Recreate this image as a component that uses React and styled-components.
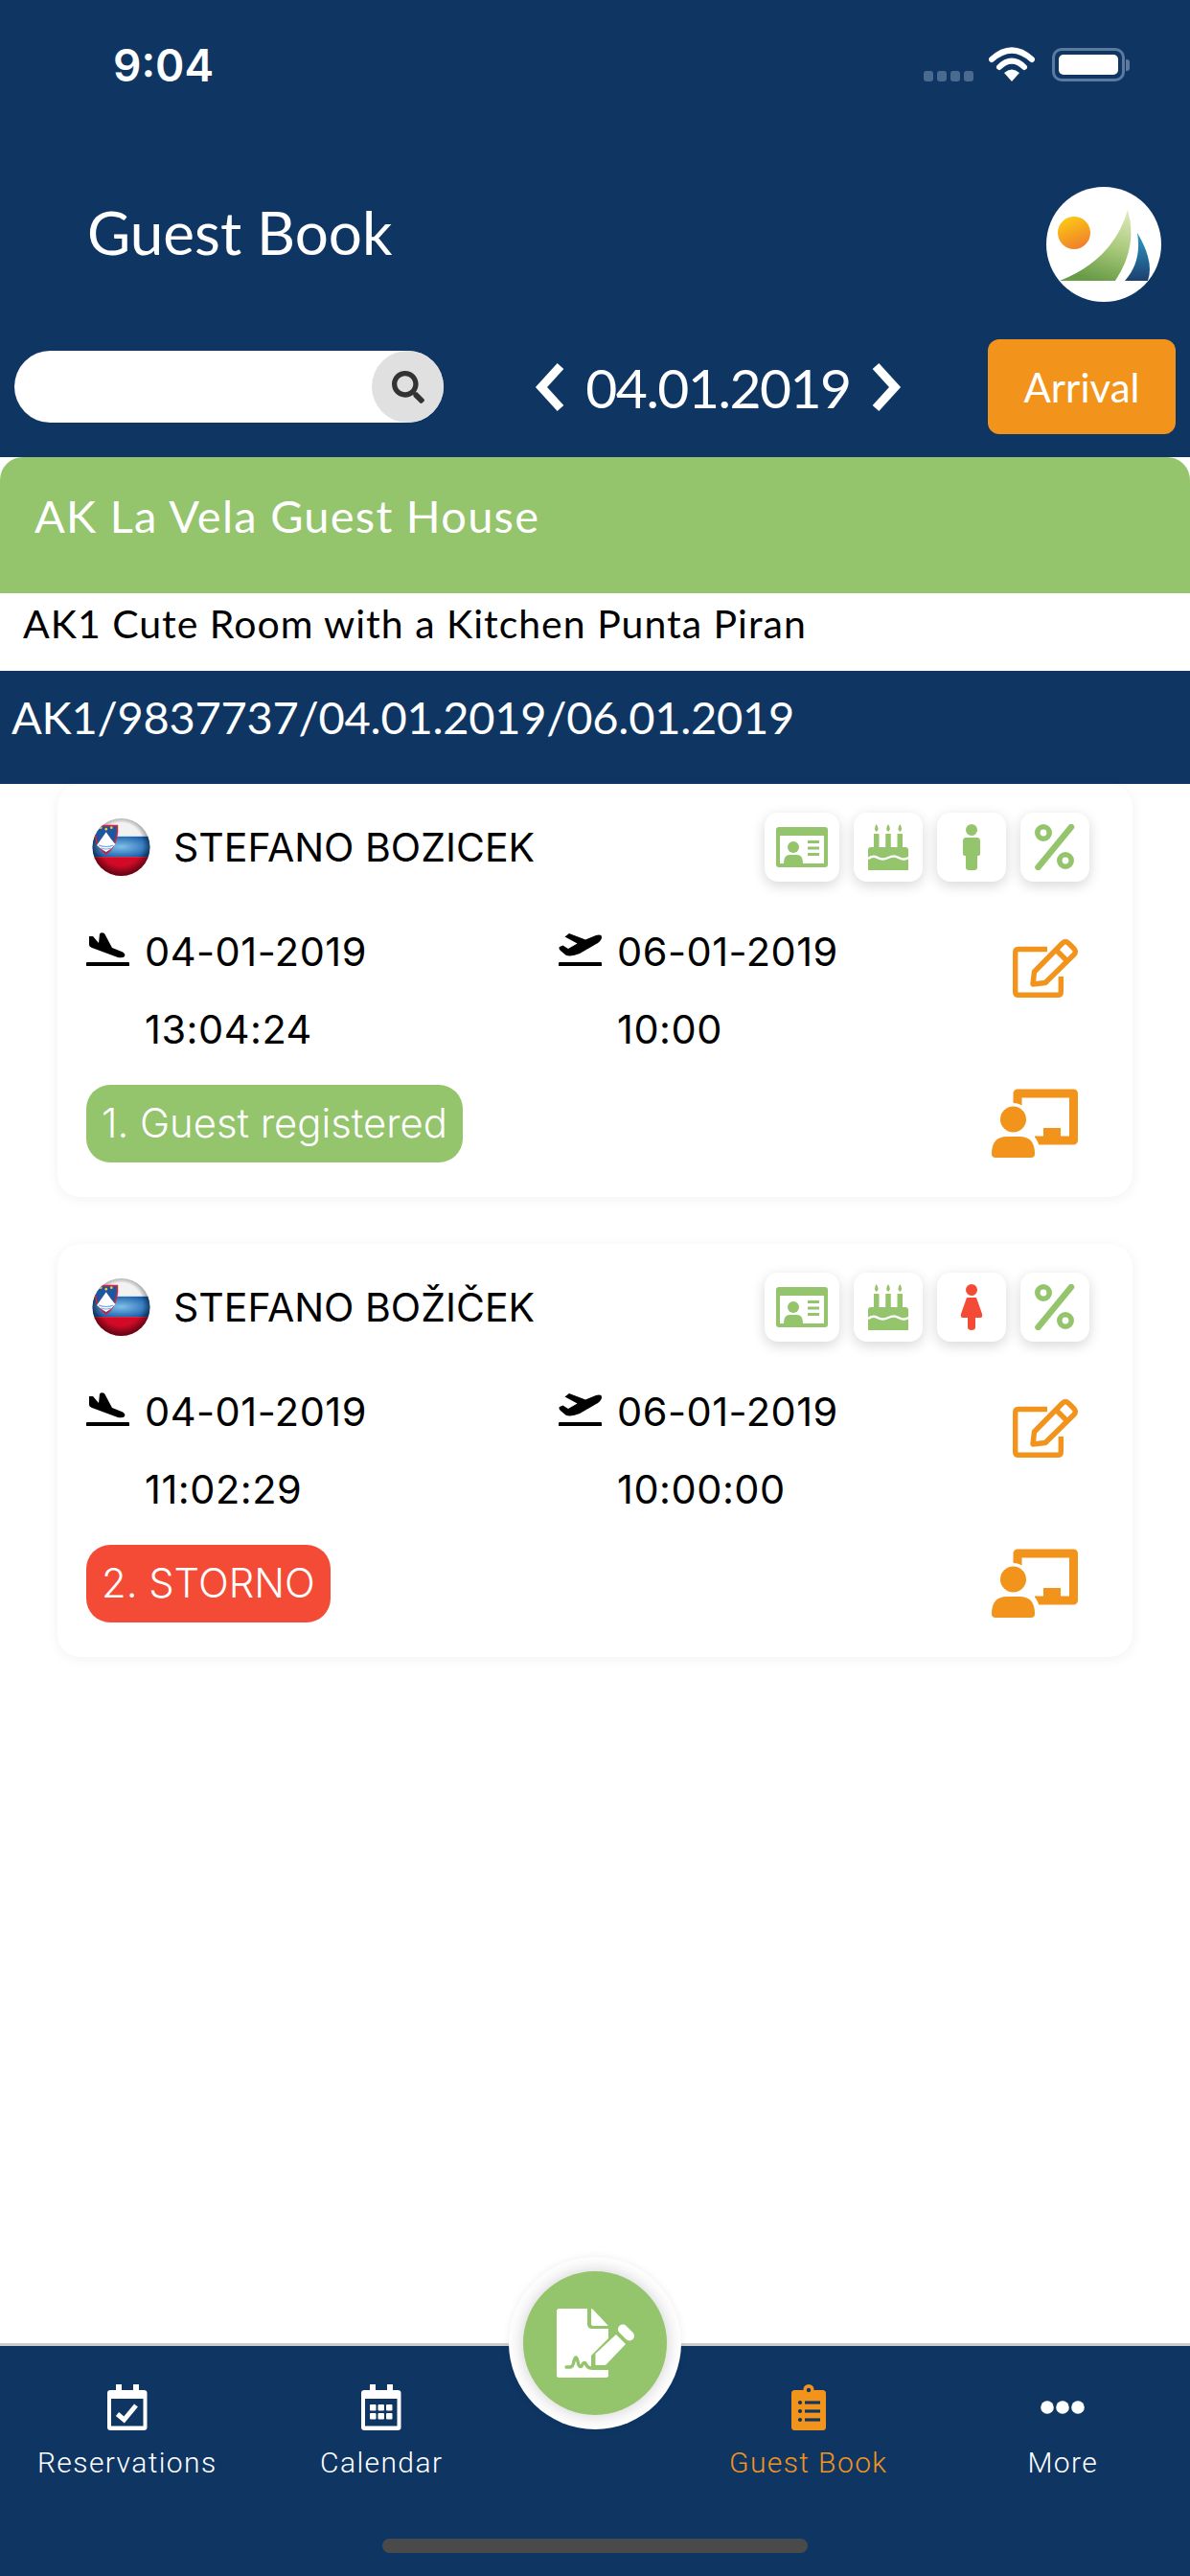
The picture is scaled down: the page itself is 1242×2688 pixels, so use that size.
import React from "react";
import styled, { createGlobalStyle } from "styled-components";
import { FaSearch } from "react-icons/fa";

const NAVY = "#0f3663";
const GREEN = "#94c46c";
const ORANGE = "#f2931c";
const RED = "#f44b36";

const GlobalStyle = createGlobalStyle`
  html, body {
    margin: 0;
    padding: 0;
    background: #fff;
  }
  * {
    box-sizing: border-box;
  }
`;

const Page = styled.div`
  width: 1242px;
  height: 2688px;
  display: flex;
  flex-direction: column;
  overflow: hidden;
  background: #fff;
  font-family: "Inter", "Liberation Sans", sans-serif;
`;

const Header = styled.header`
  background: ${NAVY};
  height: 477px;
  flex-shrink: 0;
`;

const StatusBar = styled.div`
  height: 195px;
  padding: 43px 68px 0 118px;
  display: flex;
  justify-content: space-between;
  align-items: flex-start;
`;

const Clock = styled.div`
  color: #fff;
  font-size: 46px;
  font-weight: 600;
  line-height: 50px;
`;

const StatusIcons = styled.div`
  display: flex;
  align-items: flex-end;
  height: 36px;
  margin-top: 6px;
`;

const SignalDots = styled.div`
  display: flex;
  gap: 4px;
  margin-right: 16px;
`;

const SignalDot = styled.span`
  width: 10px;
  height: 11px;
  border-radius: 3px;
  background: #4a6a90;
`;

const Battery = styled.div`
  width: 76px;
  height: 35px;
  margin-left: 18px;
  padding: 4px;
  border: 3px solid #5c7a9e;
  border-radius: 10px;
  position: relative;
  &::after {
    content: "";
    position: absolute;
    right: -8px;
    top: 9px;
    width: 4px;
    height: 12px;
    border-radius: 0 3px 3px 0;
    background: #5c7a9e;
  }
`;

const BatteryFill = styled.div`
  height: 100%;
  background: #fff;
  border-radius: 5px;
`;

const TitleRow = styled.div`
  height: 120px;
  padding: 0 30px 0 91px;
  display: flex;
  justify-content: space-between;
  align-items: flex-start;
`;

const Title = styled.h1`
  margin: 12px 0 0;
  color: #fff;
  font-family: "Lato", sans-serif;
  font-size: 62px;
  font-weight: 400;
  line-height: 70px;
`;

const Logo = styled.div`
  width: 120px;
  height: 120px;
  border-radius: 50%;
  background: #fff;
  overflow: hidden;
`;

const Toolbar = styled.div`
  margin-top: 39px;
  height: 99px;
  padding: 0 15px;
  display: flex;
  align-items: center;
  justify-content: space-between;
`;

const Search = styled.div`
  width: 448px;
  height: 75px;
  border-radius: 38px;
  background: #fff;
  display: flex;
  justify-content: flex-end;
`;

const SearchCap = styled.div`
  width: 75px;
  height: 75px;
  border-radius: 50%;
  background: #e0e0e0;
  color: #333;
  display: flex;
  align-items: center;
  justify-content: center;
`;

const DatePicker = styled.div`
  display: flex;
  align-items: center;
  gap: 21px;
  margin-left: 5px;
`;

const DateText = styled.div`
  color: #fff;
  font-family: "Lato", sans-serif;
  font-size: 57px;
  line-height: 60px;
  letter-spacing: -1.5px;
`;

const ArrivalButton = styled.button`
  width: 196px;
  height: 99px;
  border: 0;
  border-radius: 12px;
  background: ${ORANGE};
  color: #fff;
  font-family: "Lato", sans-serif;
  font-size: 42px;
  padding: 0;
`;

const PropertyBar = styled.div`
  height: 142px;
  padding: 31px 36px 0;
  background: ${GREEN};
  border-radius: 24px 24px 0 0;
  color: #fff;
  font-family: "Lato", sans-serif;
  font-size: 47px;
  line-height: 60px;
  letter-spacing: 1.25px;
`;

const RoomRow = styled.div`
  height: 81px;
  padding: 7px 24px 0;
  background: #fff;
  color: #000;
  font-family: "Lato", sans-serif;
  font-size: 41px;
  line-height: 50px;
  letter-spacing: 1px;
`;

const BookingRow = styled.div`
  height: 118px;
  padding: 18px 12px 0;
  background: ${NAVY};
  color: #fff;
  font-family: "Lato", sans-serif;
  font-size: 47px;
  line-height: 60px;
  letter-spacing: -0.25px;
`;

const PropertyStack = styled.div`
  flex-shrink: 0;
`;

const CardList = styled.div`
  padding: 0 60px;
  display: flex;
  flex-direction: column;
  gap: 49px;
`;

const Card = styled.article`
  height: 431px;
  padding: 30px 45px 0 30px;
  background: #fff;
  border-radius: 24px;
  box-shadow: 0 2px 14px rgba(0, 0, 0, 0.06);
`;

const CardTop = styled.div`
  height: 72px;
  display: flex;
  align-items: center;
  justify-content: space-between;
`;

const GuestName = styled.div`
  display: flex;
  align-items: center;
  gap: 24px;
  margin-left: 6px;
  font-size: 41px;
  color: #000;
`;

const Badges = styled.div`
  display: flex;
  gap: 15px;
`;

const Badge = styled.div`
  width: ${(p) => (p.$wide ? 78 : 72)}px;
  height: 72px;
  background: #fff;
  border-radius: 14px;
  box-shadow: 0 4px 14px rgba(0, 0, 0, 0.16);
  display: flex;
  align-items: center;
  justify-content: center;
`;

const CardBody = styled.div`
  margin-top: 32px;
  display: flex;
  justify-content: space-between;
`;

const DateColumns = styled.div`
  display: grid;
  grid-template-columns: 493px auto;
`;

const DateBlock = styled.div`
  display: grid;
  grid-template-columns: 61px auto;
  grid-auto-rows: 81px;
  align-items: center;
  font-size: 41.5px;
  letter-spacing: 0.5px;
  color: #000;
`;

const DateIcon = styled.div`
  height: 36px;
  margin-top: -13px;
`;

const TimeText = styled.div`
  grid-column: 2;
`;

const StatusPill = styled.div`
  display: inline-block;
  height: 81px;
  margin-top: 18px;
  padding: 0 16px;
  border-radius: 25px;
  background: ${(p) => (p.$cancelled ? RED : GREEN)};
  color: #fff;
  font-size: 41.8px;
  font-weight: 300;
  line-height: 81px;
`;

const Actions = styled.div`
  margin-right: 12px;
  padding-top: 28px;
  display: flex;
  flex-direction: column;
  align-items: flex-end;
  gap: 95px;
`;

const Spacer = styled.div`
  flex: 1;
`;

const TabBar = styled.nav`
  position: relative;
  height: 243px;
  flex-shrink: 0;
  background: ${NAVY};
  border-top: 3px solid #cdcdcd;
  display: grid;
  grid-template-columns: 1fr 1fr 180px 1fr 1fr;
`;

const Tab = styled.div`
  padding-top: 40px;
  display: flex;
  flex-direction: column;
  align-items: center;
  color: ${(p) => (p.$active ? ORANGE : "#fff")};
  font-family: "Roboto", sans-serif;
  font-size: 30px;
  font-weight: 300;
  letter-spacing: 1.4px;
`;

const TabIcon = styled.div`
  height: 48px;
  display: flex;
  align-items: center;
  margin-bottom: 16px;
`;

const FabRing = styled.div`
  position: absolute;
  left: 531px;
  top: -93px;
  width: 180px;
  height: 180px;
  border-radius: 50%;
  background: #fff;
  box-shadow: 0 0 10px rgba(0, 0, 0, 0.06);
  display: flex;
  align-items: center;
  justify-content: center;
`;

const Fab = styled.div`
  width: 150px;
  height: 150px;
  border-radius: 50%;
  background: ${GREEN};
  box-shadow: 0 0 18px rgba(0, 0, 0, 0.2);
  display: flex;
  align-items: center;
  justify-content: center;
`;

const HomeIndicator = styled.div`
  position: absolute;
  left: 399px;
  bottom: 24px;
  width: 444px;
  height: 15px;
  border-radius: 8px;
  background: #4a4a4a;
`;

const Chevron = ({ left }) => (
  <svg width="32" height="52" viewBox="0 0 32 52">
    <polyline
      points={left ? "27,4 7,26 27,48" : "5,4 25,26 5,48"}
      fill="none"
      stroke="#fff"
      strokeWidth="9"
    />
  </svg>
);

const Wifi = () => (
  <svg width="48" height="36" viewBox="0 0 48 36">
    <path d="M3 13 Q24 -6 45 13" fill="none" stroke="#fff" strokeWidth="6" strokeLinecap="round" />
    <path d="M11 21 Q24 8 37 21" fill="none" stroke="#fff" strokeWidth="6" strokeLinecap="round" />
    <path d="M24 36 L16 27 Q24 20 32 27 Z" fill="#fff" />
  </svg>
);

const LogoMark = () => (
  <svg width="120" height="120" viewBox="0 0 120 120">
    <defs>
      <linearGradient id="sun" x1="0.3" y1="0" x2="0.7" y2="1">
        <stop offset="0" stopColor="#fdc914" />
        <stop offset="1" stopColor="#ef7d2c" />
      </linearGradient>
      <linearGradient id="sailGreen" x1="0.8" y1="0" x2="0.5" y2="1">
        <stop offset="0" stopColor="#dde7b8" />
        <stop offset="0.5" stopColor="#a9c97c" />
        <stop offset="1" stopColor="#689b45" />
      </linearGradient>
      <linearGradient id="sailBlue" x1="0.5" y1="0" x2="0.5" y2="1">
        <stop offset="0" stopColor="#2f9bc9" />
        <stop offset="1" stopColor="#1c3f6e" />
      </linearGradient>
    </defs>
    <circle cx="29" cy="48" r="17" fill="url(#sun)" />
    <path d="M14 98 Q70 76 85 24 Q96 62 72 98 Z" fill="url(#sailGreen)" />
    <path d="M95 48 Q113 78 106 98 H82 Q100 78 95 48 Z" fill="url(#sailBlue)" />
  </svg>
);

const Flag = ({ uid }) => (
  <svg width="61" height="62" viewBox="0 0 60 60">
    <defs>
      <clipPath id={`clip${uid}`}>
        <circle cx="30" cy="30" r="29.5" />
      </clipPath>
      <radialGradient id={`blue${uid}`} cx="0.5" cy="0.5" r="0.6">
        <stop offset="0" stopColor="#7fc0ea" />
        <stop offset="1" stopColor="#1458a6" />
      </radialGradient>
      <radialGradient id={`shade${uid}`} cx="0.5" cy="0.45" r="0.52">
        <stop offset="0.7" stopColor="#000" stopOpacity="0" />
        <stop offset="1" stopColor="#000" stopOpacity="0.5" />
      </radialGradient>
    </defs>
    <g clipPath={`url(#clip${uid})`}>
      <rect width="60" height="19" fill="#f2f2f2" />
      <rect y="19" width="60" height="21" fill={`url(#blue${uid})`} />
      <rect y="40" width="60" height="20" fill="#d20a28" />
      <rect width="60" height="60" fill={`url(#shade${uid})`} />
      <path d="M3 8 H26 Q27 28 14.5 37 Q2 29 3 8 Z" fill="#1f56a2" stroke="#dd2233" strokeWidth="1.5" />
      <path d="M5 28 L10 21 L14.5 14.5 L19 21 L24 27 Q20 32 14.5 35 Q9 32 5 28 Z" fill="#fff" />
      <path d="M7 28 Q14.5 31 22 28 M9 31 Q14.5 33 20 31" fill="none" stroke="#6aa6dc" strokeWidth="1" />
      <circle cx="9" cy="10" r="1.3" fill="#f0d030" />
      <circle cx="20" cy="10" r="1.3" fill="#f0d030" />
      <circle cx="14.5" cy="11.5" r="1.3" fill="#f0d030" />
    </g>
  </svg>
);

const LandingIcon = () => (
  <svg width="45" height="36" viewBox="0 0 45 36">
    <path
      fill="#000"
      d="M3 5 H7 L13 12 L14 2.5 Q16 0.5 19 2 L27 17 L37 21 Q41.5 23 40 26 Q38 28 33 27 L6 17 Q3 16 3 14 Z"
    />
    <rect y="32" width="45" height="4.3" rx="1" fill="#000" />
  </svg>
);

const TakeoffIcon = () => (
  <svg width="45" height="36" viewBox="0 0 45 36">
    <path
      fill="#000"
      d="M6.5 5.5 L11 2 L28 8.5 L39 4 Q45 2.5 45 6 Q45 9 41 12 L22 23 Q14 26.5 8 25 L2 20 Q-0.5 17.5 1 16 L4.5 14.5 L10 18 L19.5 12.5 Z"
    />
    <rect y="32" width="45" height="4.3" rx="1" fill="#000" />
  </svg>
);

const IdCardIcon = () => (
  <svg width="54" height="42" viewBox="0 0 54 42">
    <rect width="54" height="42" rx="3" fill={GREEN} />
    <rect x="4" y="9" width="46" height="29" fill="#fff" />
    <circle cx="18" cy="21" r="6" fill={GREEN} />
    <path d="M8 38 Q8 29 14 29 H22 Q28 29 28 38 Z" fill={GREEN} />
    <rect x="33" y="14" width="12" height="3" fill={GREEN} />
    <rect x="33" y="20.5" width="12" height="3" fill={GREEN} />
    <rect x="33" y="27" width="12" height="3" fill={GREEN} />
  </svg>
);

const CakeIcon = () => (
  <svg width="42" height="48" viewBox="0 0 42 48">
    <rect x="6" y="10" width="5.5" height="16" fill={GREEN} />
    <rect x="18.25" y="10" width="5.5" height="16" fill={GREEN} />
    <rect x="30.5" y="10" width="5.5" height="16" fill={GREEN} />
    <path d="M8.75 0 Q12.25 5 8.75 8 Q5.25 5 8.75 0 Z" fill={GREEN} />
    <path d="M21 0 Q24.5 5 21 8 Q17.5 5 21 0 Z" fill={GREEN} />
    <path d="M33.25 0 Q36.75 5 33.25 8 Q29.75 5 33.25 0 Z" fill={GREEN} />
    <path d="M0 27 Q0 24 3 24 H39 Q42 24 42 27 V48 H0 Z" fill={GREEN} />
    <path
      d="M0 36 Q5 32 10 35 T21 35 T32 35 T42 35"
      fill="none"
      stroke="#fff"
      strokeWidth="2.5"
    />
  </svg>
);

const MaleIcon = () => (
  <svg width="18" height="48" viewBox="0 0 18 48">
    <circle cx="9" cy="6" r="6" fill={GREEN} />
    <path d="M3 14 H15 Q18 14 18 18 V31 Q18 33 15 33 V45 Q15 48 12 48 H6 Q3 48 3 45 V33 Q0 33 0 31 V18 Q0 14 3 14 Z" fill={GREEN} />
  </svg>
);

const FemaleIcon = () => (
  <svg width="24" height="48" viewBox="0 0 24 48">
    <circle cx="12" cy="6" r="6" fill={RED} />
    <path d="M7 14 H17 L23 31 Q24 35 21 35 H16 V45 Q16 48 12 48 Q8 48 8 45 V35 H3 Q0 35 1 31 Z" fill={RED} />
  </svg>
);

const PercentIcon = () => (
  <svg width="42" height="48" viewBox="0 0 42 48">
    <circle cx="9" cy="9" r="6.2" fill="none" stroke={GREEN} strokeWidth="5.6" />
    <circle cx="32" cy="38" r="6.2" fill="none" stroke={GREEN} strokeWidth="5.6" />
    <line x1="38" y1="3" x2="3.5" y2="45" stroke={GREEN} strokeWidth="6.5" strokeLinecap="round" />
  </svg>
);

const EditIcon = () => (
  <svg width="68" height="61" viewBox="0 0 68 61" fill="none" stroke={ORANGE} strokeWidth="5.4">
    <path d="M36 10.5 H6 Q2.7 10.5 2.7 14 V55 Q2.7 58.3 6 58.3 H47 Q50.3 58.3 50.3 55 V39" />
    <path d="M21 47 L22.5 34 L52 4 Q55 1.5 58 4 L64 10 Q66.5 13 64 16 L34 45.5 Z" strokeLinejoin="round" />
    <path d="M45 11 L57 23" />
  </svg>
);

const PresentIcon = () => (
  <svg width="90" height="72" viewBox="0 0 90 72">
    <path d="M27 18 V5 H85.5 V54 H45" fill="none" stroke={ORANGE} strokeWidth="9" strokeLinejoin="round" />
    <rect x="54" y="41" width="18" height="10" fill={ORANGE} />
    <circle cx="22.5" cy="32" r="17" fill="#fff" />
    <path d="M-3 72 V58 Q0 45 15 45 H30 Q45 45 49 58 V72 Z" fill="#fff" />
    <circle cx="22.5" cy="32" r="13.5" fill={ORANGE} />
    <path d="M0 68 Q0 50 16 50 H29 Q45 50 45 68 Q45 72 41 72 H4 Q0 72 0 68 Z" fill={ORANGE} />
  </svg>
);

const CalendarFrame = ({ children }) => (
  <svg width="42" height="48" viewBox="0 0 42 48">
    <path
      fillRule="evenodd"
      fill="#fff"
      d="M9 0 H15 V6 H27 V0 H33 V6 H38 Q41.5 6 41.5 9 V45 Q41.5 48 38 48 H3.5 Q0 48 0 45 V9 Q0 6 3.5 6 H9 Z M4 15 V43.5 H37.5 V15 Z"
    />
    {children}
  </svg>
);

const CalendarCheckIcon = () => (
  <CalendarFrame>
    <path d="M10.5 31 L17.5 37 L30 22" fill="none" stroke="#fff" strokeWidth="5" />
  </CalendarFrame>
);

const CalendarGridIcon = () => (
  <CalendarFrame>
    {[9, 17.5, 26].map((x) =>
      [21, 30].map((y) => <rect key={`${x}-${y}`} x={x} y={y} width="6.5" height="6.5" rx="1" fill="#fff" />)
    )}
  </CalendarFrame>
);

const ClipboardIcon = () => (
  <svg width="36" height="48" viewBox="0 0 36 48">
    <circle cx="18" cy="5.5" r="5.5" fill={ORANGE} />
    <rect y="6" width="36" height="42" rx="3.5" fill={ORANGE} />
    <circle cx="18" cy="6" r="2.2" fill={NAVY} />
    {[19, 28, 37].map((y) => (
      <g key={y}>
        <circle cx="9" cy={y} r="2.1" fill={NAVY} />
        <rect x="14" y={y - 1.6} width="16" height="3.2" fill={NAVY} />
      </g>
    ))}
  </svg>
);

const DotsIcon = () => (
  <svg width="46" height="14" viewBox="0 0 46 14">
    <circle cx="7" cy="7" r="6.8" fill="#fff" />
    <circle cx="23" cy="7" r="6.8" fill="#fff" />
    <circle cx="39" cy="7" r="6.8" fill="#fff" />
  </svg>
);

const SignDocIcon = () => (
  <svg width="81" height="72" viewBox="0 0 81 72">
    <path
      fill="#fff"
      d="M2.5 0 H32 V16 Q32 21 37 21 H54 V31 L36 49 V64 H54 V69.5 Q54 72 51.5 72 H2.5 Q0 72 0 69.5 V2.5 Q0 0 2.5 0 Z"
    />
    <path fill="#fff" d="M36 0 Q37 0 38 1 L53 17 Q54 18 53 18 H38 Q36 18 36 16 Z" />
    <path fill="#fff" d="M40.5 59 V47 L62 27 L72 37 L51 59 Z" />
    <line x1="69" y1="21.5" x2="76" y2="28.5" stroke="#fff" strokeWidth="10" strokeLinecap="round" />
    <path
      d="M10 61 H14 Q17 61 18 55 Q20 47 22 55 Q23 62 26 60 Q28 55 30 57 Q32 62 36 62"
      fill="none"
      stroke={GREEN}
      strokeWidth="3.4"
      strokeLinecap="round"
    />
  </svg>
);

const guests = [
  {
    name: "STEFANO BOZICEK",
    arrival: "13:04:24",
    departure: "10:00",
    status: "1. Guest registered",
    gender: <MaleIcon />,
  },
  {
    name: "STEFANO BOŽIČEK",
    arrival: "11:02:29",
    departure: "10:00:00",
    status: "2. STORNO",
    cancelled: true,
    gender: <FemaleIcon />,
  },
];

const GuestCard = ({ guest, uid }) => (
  <Card>
    <CardTop>
      <GuestName>
        <Flag uid={uid} />
        {guest.name}
      </GuestName>
      <Badges>
        <Badge $wide>
          <IdCardIcon />
        </Badge>
        <Badge>
          <CakeIcon />
        </Badge>
        <Badge>{guest.gender}</Badge>
        <Badge>
          <PercentIcon />
        </Badge>
      </Badges>
    </CardTop>
    <CardBody>
      <div>
        <DateColumns>
          <DateBlock>
            <DateIcon>
              <LandingIcon />
            </DateIcon>
            04-01-2019
            <TimeText>{guest.arrival}</TimeText>
          </DateBlock>
          <DateBlock>
            <DateIcon>
              <TakeoffIcon />
            </DateIcon>
            06-01-2019
            <TimeText>{guest.departure}</TimeText>
          </DateBlock>
        </DateColumns>
        <StatusPill $cancelled={guest.cancelled}>{guest.status}</StatusPill>
      </div>
      <Actions>
        <EditIcon />
        <PresentIcon />
      </Actions>
    </CardBody>
  </Card>
);

export default function App() {
  return (
    <Page>
      <GlobalStyle />
      <Header>
        <StatusBar>
          <Clock>9:04</Clock>
          <StatusIcons>
            <SignalDots>
              <SignalDot />
              <SignalDot />
              <SignalDot />
              <SignalDot />
            </SignalDots>
            <Wifi />
            <Battery>
              <BatteryFill />
            </Battery>
          </StatusIcons>
        </StatusBar>
        <TitleRow>
          <Title>Guest Book</Title>
          <Logo>
            <LogoMark />
          </Logo>
        </TitleRow>
        <Toolbar>
          <Search>
            <SearchCap>
              <FaSearch size={34} />
            </SearchCap>
          </Search>
          <DatePicker>
            <Chevron left />
            <DateText>04.01.2019</DateText>
            <Chevron />
          </DatePicker>
          <ArrivalButton>Arrival</ArrivalButton>
        </Toolbar>
      </Header>
      <PropertyStack>
        <PropertyBar>AK La Vela Guest House</PropertyBar>
        <RoomRow>AK1 Cute Room with a Kitchen Punta Piran</RoomRow>
        <BookingRow>AK1/9837737/04.01.2019/06.01.2019</BookingRow>
      </PropertyStack>
      <CardList>
        {guests.map((guest, i) => (
          <GuestCard key={guest.name} guest={guest} uid={i} />
        ))}
      </CardList>
      <Spacer />
      <TabBar>
        <Tab>
          <TabIcon>
            <CalendarCheckIcon />
          </TabIcon>
          Reservations
        </Tab>
        <Tab>
          <TabIcon>
            <CalendarGridIcon />
          </TabIcon>
          Calendar
        </Tab>
        <div />
        <Tab $active>
          <TabIcon>
            <ClipboardIcon />
          </TabIcon>
          Guest Book
        </Tab>
        <Tab>
          <TabIcon>
            <DotsIcon />
          </TabIcon>
          More
        </Tab>
        <FabRing>
          <Fab>
            <SignDocIcon />
          </Fab>
        </FabRing>
        <HomeIndicator />
      </TabBar>
    </Page>
  );
}
